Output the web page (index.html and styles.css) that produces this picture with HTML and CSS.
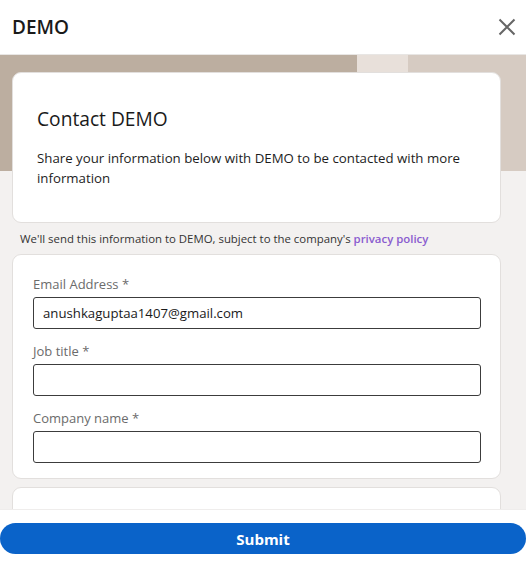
FILE: index.html
```html
<!DOCTYPE html>
<html lang="en">
<head>
    <meta charset="UTF-8">
    <meta name="viewport" content="width=device-width, initial-scale=1.0">
    <title>Contact DEMO</title>
    <link rel="stylesheet" href="styles.css">
</head>
<body>

<div class="modal">
    <header class="modal-header">
        <h2>DEMO</h2>
        <button class="close-button" aria-label="Close">
            <svg width="18" height="18" viewBox="0 0 18 18">
                <path d="M1.5 1.5 L16.5 16.5 M16.5 1.5 L1.5 16.5" stroke="#666" stroke-width="2" fill="none"/>
            </svg>
        </button>
    </header>

    <div class="modal-body">
        <div class="banner">
            <div class="banner-dark"></div>
            <div class="banner-light"></div>
            <div class="banner-mid"></div>
        </div>

        <div class="content">
            <div class="card intro">
                <h3>Contact DEMO</h3>
                <p>Share your information below with DEMO to be contacted with more information</p>
            </div>

            <p class="notice">We'll send this information to DEMO, subject to the company's <a href="#">privacy policy</a></p>

            <form class="card form-card">
                <label class="field">
                    <span class="field-label">Email Address *</span>
                    <input type="text" value="anushkaguptaa1407@gmail.com">
                </label>
                <label class="field">
                    <span class="field-label">Job title *</span>
                    <input type="text">
                </label>
                <label class="field">
                    <span class="field-label">Company name *</span>
                    <input type="text">
                </label>
            </form>

            <div class="card extra"></div>
        </div>
    </div>

    <footer class="modal-footer">
        <button class="submit-button">Submit</button>
    </footer>
</div>

</body>
</html>
```

FILE: styles.css
```css
body {
    margin: 0;
    padding: 0;
    font-family: "Open Sans", "Noto Sans", Arial, sans-serif;
    color: #1d1d1d;
    background-color: #fff;
}
.modal {
    width: 526px;
    height: 561px;
    display: flex;
    flex-direction: column;
    overflow: hidden;
}
.modal-header {
    height: 55px;
    flex-shrink: 0;
    display: flex;
    align-items: center;
    justify-content: space-between;
    padding: 0 8px 1px 12px;
    border-bottom: 1px solid #e8e6e4;
    box-sizing: border-box;
    background-color: #fff;
}
.modal-header h2 {
    margin: 0;
    font-size: 19px;
    font-weight: 600;
    color: #1a1a1a;
}
.close-button {
    background: none;
    border: none;
    padding: 0;
    width: 22px;
    height: 22px;
    display: flex;
    align-items: center;
    justify-content: center;
    cursor: pointer;
}
.modal-body {
    flex: 1;
    position: relative;
    background-color: #f3f1f0;
    overflow: hidden;
}
.banner {
    position: absolute;
    top: 0;
    left: 0;
    right: 0;
    height: 116px;
    display: flex;
}
.banner-dark {
    width: 357px;
    background-color: #bcaea0;
}
.banner-light {
    width: 51px;
    background-color: #e8e0da;
}
.banner-mid {
    flex: 1;
    background-color: #d6cbc2;
}
.content {
    position: relative;
    padding: 17px 25px 0 12px;
}
.card {
    background-color: #fff;
    border: 1px solid #e2dfdd;
    border-radius: 9px;
}
.intro {
    height: 151px;
    box-sizing: border-box;
    padding: 32px 24px 0 24px;
}
.intro h3 {
    margin: 0 0 16px 0;
    font-size: 19.2px;
    font-weight: 400;
    color: #1a1a1a;
}
.intro p {
    margin: 0;
    font-size: 13.25px;
    line-height: 20px;
    color: #1d1d1d;
}
.notice {
    margin: 8px 0 7px 8px;
    font-size: 11.4px;
    line-height: 16px;
    color: #333;
}
.notice a {
    color: #8a5ccf;
    font-weight: 600;
    text-decoration: none;
}
.form-card {
    height: 225px;
    box-sizing: border-box;
    padding: 20px 19px 0 20px;
    display: flex;
    flex-direction: column;
    gap: 13px;
}
.field {
    display: flex;
    flex-direction: column;
    gap: 3px;
}
.field-label {
    font-size: 13px;
    line-height: 19px;
    color: #6b6b6b;
}
.field input {
    height: 32px;
    box-sizing: border-box;
    border: 1px solid #3c3c3c;
    border-radius: 3px;
    padding: 0 9px;
    font-family: inherit;
    font-size: 13.2px;
    color: #1a1a1a;
    outline: none;
}
.extra {
    margin-top: 8px;
    height: 60px;
}
.modal-footer {
    height: 52px;
    flex-shrink: 0;
    box-sizing: border-box;
    padding: 13px 0 8px 0;
    background-color: #fff;
    border-top: 1px solid #efedec;
}
.submit-button {
    width: 100%;
    height: 31px;
    border: none;
    border-radius: 16px;
    background-color: #0a63c9;
    color: #fff;
    font-family: inherit;
    font-size: 15px;
    font-weight: 700;
    cursor: pointer;
}
```
